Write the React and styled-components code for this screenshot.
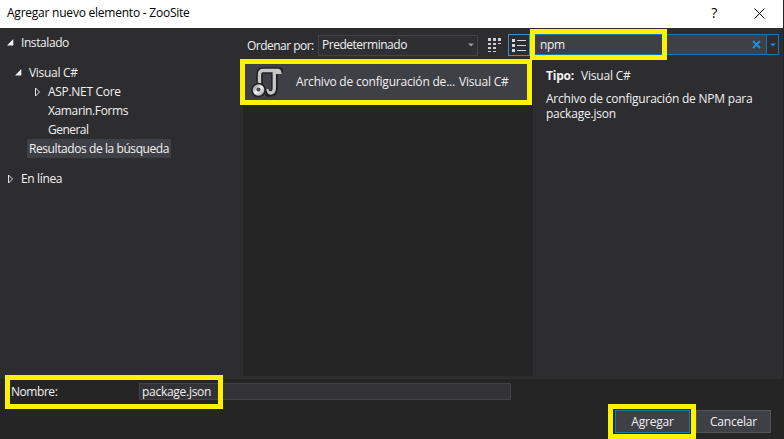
import React from "react";
import styled, { createGlobalStyle } from "styled-components";

const GlobalStyle = createGlobalStyle`
  * { box-sizing: border-box; }
  body { margin: 0; overflow: hidden; background: #252526; }
`;

const Dialog = styled.div`
  position: relative;
  display: flex;
  flex-direction: column;
  width: 784px;
  height: 439px;
  overflow: hidden;
  background: #252526;
  color: #f1f1f1;
  font: 12px/16px "Open Sans", "Noto Sans", sans-serif;
  white-space: nowrap;
`;

const Text = styled.span`
  letter-spacing: ${(p) => p.$track ?? -0.2}px;
  font-weight: ${(p) => (p.$bold ? 700 : 400)};
`;

const TitleBar = styled.header`
  display: flex;
  align-items: center;
  height: 28px;
  flex: none;
  margin-right: 1px;
  padding: 0 18px 2px 7px;
  background: #fff;
  color: #000;
`;

const TitleButtons = styled.div`
  display: flex;
  align-items: center;
  gap: 37px;
  margin-left: auto;
  font-size: 14px;
  svg { display: block; }
`;

const Main = styled.main`
  display: grid;
  grid-template-columns: 243px 290px 1fr;
  flex: none;
  height: 351px;
  margin-right: 1px;
  background: #2d2d30;
`;

const Tree = styled.nav`
  display: flex;
  flex-direction: column;
  align-items: flex-start;
  padding-top: 5px;
`;

const TreeRow = styled.div`
  display: flex;
  align-items: center;
  height: 19px;
  margin-left: ${(p) => p.$indent}px;
  margin-top: ${(p) => p.$gap || 0}px;
  padding: 0 2px;
  background: ${(p) => (p.$selected ? "#3f3f46" : "transparent")};
`;

const ArrowSlot = styled.span`
  display: flex;
  width: 14px;
  svg { display: block; }
`;

const Center = styled.section`
  display: flex;
  flex-direction: column;
`;

const SortBar = styled.div`
  display: flex;
  align-items: center;
  height: 33px;
  padding: 1px 0 0 4px;
`;

const SortLabel = styled.div`
  width: 71px;
  padding-top: 2px;
`;

const Select = styled.div`
  display: flex;
  align-items: center;
  justify-content: space-between;
  width: 160px;
  height: 21px;
  padding: 0 3px 0 3px;
  background: #2f2f33;
  border: 1px solid #434346;
`;

const IconButton = styled.div`
  display: grid;
  place-items: center;
  width: 22px;
  height: 22px;
  margin-left: ${(p) => p.$left}px;
  border: 1px solid ${(p) => (p.$active ? "#3c8fd6" : "transparent")};
`;

const ResultList = styled.div`
  height: 315px;
  background: #252526;
`;

const ResultItem = styled.div`
  display: flex;
  align-items: center;
  height: 41px;
  margin-right: 3px;
  padding: 0 0 0 8px;
  background: #3f3f46;
`;

const ResultName = styled.div`
  width: 163px;
  margin-left: 13px;
`;

const Details = styled.aside`
  display: flex;
  flex-direction: column;
`;

const SearchBox = styled.div`
  display: flex;
  align-items: center;
  width: 246px;
  height: 21px;
  margin-top: 6px;
  background: #3f3f46;
  border: 1px solid #1c75ae;
  padding-left: 6px;
`;

const ClearButton = styled.div`
  margin-left: auto;
  margin-right: 5px;
  svg { display: block; }
`;

const SearchMenu = styled.div`
  display: grid;
  place-items: center;
  width: 12px;
  height: 100%;
  background: #2d2d30;
  border-left: 1px solid #1c75ae;
`;

const Description = styled.div`
  padding: 13px 0 0 13px;
`;

const TypeRow = styled.div`
  display: flex;
  gap: 7px;
`;

const Paragraph = styled.p`
  margin: 7px 0 0;
  line-height: 15px;
  letter-spacing: -0.22px;
`;

const Footer = styled.footer`
  display: flex;
  flex-direction: column;
  justify-content: space-between;
  height: 60px;
  padding: 4px 13px 6px 11px;
`;

const NameRow = styled.div`
  display: flex;
  align-items: center;
`;

const NameLabel = styled.div`
  width: 128px;
`;

const NameInput = styled.div`
  display: flex;
  align-items: center;
  width: 372px;
  height: 17px;
  padding-left: 2px;
  background: #333337;
  border: 1px solid #434346;
`;

const Actions = styled.div`
  display: flex;
  justify-content: flex-end;
  gap: 6px;
`;

const Button = styled.div`
  display: flex;
  align-items: center;
  justify-content: center;
  width: 75px;
  height: 23px;
  background: #3f3f46;
  border: 1px solid ${(p) => (p.$primary ? "#1c75ae" : "#555558")};
  outline: ${(p) => (p.$primary ? "2px solid #18303a" : "none")};
`;

/* Marker frames lie over the dialog. */
const Highlight = styled.div`
  position: absolute;
  left: ${(p) => p.$x}px;
  top: ${(p) => p.$y}px;
  width: ${(p) => p.$w}px;
  height: ${(p) => p.$h}px;
  border: 5px solid #fff200;
`;

const Arrow = ({ open }) => (
  <ArrowSlot>
    <svg width="9" height="10" viewBox="0 0 9 10">
      {open ? (
        <path d="M6.300 1V7.500H0Z" fill="#f1f1f1" />
      ) : (
        <path d="M1.500 1V9L5.500 5Z" fill="none" stroke="#e4e4e4" />
      )}
    </svg>
  </ArrowSlot>
);

const Caret = ({ color }) => (
  <svg width="6" height="4" viewBox="0 0 6 4">
    <path d="M0 0.5H6L3 3.5Z" fill={color} />
  </svg>
);

const TilesIcon = () => (
  <svg width="14" height="14" viewBox="0 0 14 14" fill="#d0d0d0">
    <path d="M0 0h3v3H0zM5 0h3v3H5zM10 0h3v3h-3z" />
    <path d="M0 5h3v2H0zM5 5h3v2H5zM10 5h3v1h-3z" />
    <path d="M0 9h3v2H0zM5 9h3v2H5zM0 13h3v1H0zM5 13h3v1H5z" />
  </svg>
);

const ListIcon = () => (
  <svg width="14" height="13" viewBox="0 0 14 13" fill="#d8d8d8">
    {[0, 5, 10].map((y) => (
      <g key={y}>
        <rect y={y} width="3" height="3" />
        <rect x="5" y={y + 1} width="9" height="1" />
      </g>
    ))}
  </svg>
);

const ScriptIcon = () => (
  <svg width="32" height="32" viewBox="0 0 32 32">
    <defs>
      <linearGradient id="ball" x1="0" y1="0" x2="1" y2="1">
        <stop offset="0" stopColor="#777" />
        <stop offset="0.5" stopColor="#f4f4f4" />
        <stop offset="1" stopColor="#8a8a8a" />
      </linearGradient>
    </defs>
    <g fill="none">
      <g stroke="#222225" strokeWidth="6.500" strokeLinejoin="round">
        <path d="M8.500 22V8Q8.500 4.500 12 4.500H29V6.500" />
        <path d="M23.500 5V22.500Q23.500 27.500 19 27.500H17.500V24" />
      </g>
      <g stroke="#c6c6c6" strokeWidth="3.300">
        <path d="M8.500 22V8Q8.500 4.500 12 4.500H28" />
        <path d="M23.300 5V22Q23.300 27 19 27" />
      </g>
    </g>
    <path d="M24 3H27.500Q30.500 3 30.500 8H24Z" fill="#c6c6c6" />
    <path d="M15.500 23H17.500Q17.500 25.500 20 25.700V28.500Q15.500 28.500 15.500 23Z" fill="#c6c6c6" />
    <circle cx="7.500" cy="24" r="7.300" fill="#222225" />
    <circle cx="7.500" cy="24" r="5.800" fill="url(#ball)" />
    <circle cx="7.500" cy="23.500" r="2.100" fill="#48484b" />
  </svg>
);

export default function App() {
  return (
    <>
      <GlobalStyle />
      <Dialog>
        <TitleBar>
          <Text $track={-0.23}>Agregar nuevo elemento - ZooSite</Text>
          <TitleButtons>
            <Text>?</Text>
            <svg width="11" height="11" viewBox="0 0 11 11">
              <path d="M0.500 0.500L10.500 10.500M10.500 0.500L0.500 10.500" stroke="#000" />
            </svg>
          </TitleButtons>
        </TitleBar>
        <Main>
          <Tree>
            <TreeRow $indent={5}><Arrow open /><Text $track={-0.42}>Instalado</Text></TreeRow>
            <TreeRow $indent={13} $gap={11}><Arrow open /><Text $track={-0.3}>Visual C#</Text></TreeRow>
            <TreeRow $indent={32}><Arrow /><Text $track={-0.3}>ASP.NET Core</Text></TreeRow>
            <TreeRow $indent={46}><Text $track={-0.37}>Xamarin.Forms</Text></TreeRow>
            <TreeRow $indent={46}><Text $track={-0.52}>General</Text></TreeRow>
            <TreeRow $indent={27} $selected><Text $track={-0.42}>Resultados de la búsqueda</Text></TreeRow>
            <TreeRow $indent={5} $gap={11}><Arrow /><Text $track={-0.35}>En línea</Text></TreeRow>
          </Tree>
          <Center>
            <SortBar>
              <SortLabel><Text $track={-0.52}>Ordenar por:</Text></SortLabel>
              <Select><Text $track={-0.48}>Predeterminado</Text><Caret color="#999" /></Select>
              <IconButton $left={6}><TilesIcon /></IconButton>
              <IconButton $left={2} $active><ListIcon /></IconButton>
            </SortBar>
            <ResultList>
              <ResultItem>
                <ScriptIcon />
                <ResultName><Text>Archivo de configuración de...</Text></ResultName>
                <Text $track={-0.2}>Visual C#</Text>
              </ResultItem>
            </ResultList>
          </Center>
          <Details>
            <SearchBox>
              <Text $track={-0.35}>npm</Text>
              <ClearButton>
                <svg width="9" height="9" viewBox="0 0 9 9">
                  <path d="M1 1L8 8M8 1L1 8" stroke="#1c8fd6" strokeWidth="2" />
                </svg>
              </ClearButton>
              <SearchMenu><Caret color="#1c8fd6" /></SearchMenu>
            </SearchBox>
            <Description>
              <TypeRow>
                <Text $bold>Tipo:</Text>
                <Text>Visual C#</Text>
              </TypeRow>
              <Paragraph>
                Archivo de configuración de NPM para
                <br />
                package.json
              </Paragraph>
            </Description>
          </Details>
        </Main>
        <Footer>
          <NameRow>
            <NameLabel><Text $track={-0.45}>Nombre:</Text></NameLabel>
            <NameInput><Text $track={-0.28}>package.json</Text></NameInput>
          </NameRow>
          <Actions>
            <Button $primary><Text>Agregar</Text></Button>
            <Button><Text>Cancelar</Text></Button>
          </Actions>
        </Footer>
        <Highlight $x={240} $y={59} $w={292} $h={46} />
        <Highlight $x={530} $y={29} $w={137} $h={31} />
        <Highlight $x={5} $y={375} $w={218} $h={34} />
        <Highlight $x={608} $y={404} $w={88} $h={35} />
      </Dialog>
    </>
  );
}
